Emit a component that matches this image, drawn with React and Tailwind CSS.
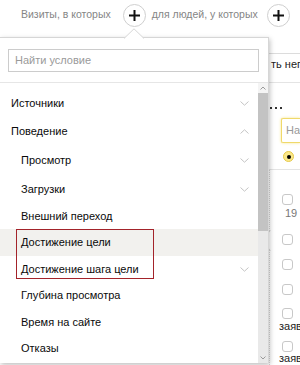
import React from "react";

function PlusCircle({ className = "" }) {
  return (
    <div className={"flex h-[23px] w-[23px] shrink-0 items-center justify-center rounded-full border border-[#cfcfcf] bg-white " + className}>
      <svg width="13" height="13" viewBox="0 0 13 13">
        <path d="M6.5 1v11M1 6.5h11" stroke="#111" strokeWidth="2" />
      </svg>
    </div>
  );
}

function Chevron({ up }) {
  return (
    <svg width="9" height="5" viewBox="0 0 9 5" className="shrink-0">
      <path d={up ? "M0.5 4.5L4.5 0.8L8.5 4.5" : "M0.5 0.5L4.5 4.2L8.5 0.5"} fill="none" stroke="#c4c4c4" strokeWidth="1" />
    </svg>
  );
}

const items = [
  { t: "Источники", h: 28, indent: false, ch: "down" },
  { t: "Поведение", h: 29, indent: false, ch: "up" },
  { t: "Просмотр", h: 29, indent: true, ch: "down" },
  { t: "Загрузки", h: 29, indent: true, ch: "down" },
  { t: "Внешний переход", h: 25, indent: true },
  { t: "Достижение цели", h: 27, indent: true, active: true },
  { t: "Достижение шага цели", h: 26, indent: true, ch: "down" },
  { t: "Глубина просмотра", h: 27, indent: true },
  { t: "Время на сайте", h: 26, indent: true },
  { t: "Отказы", h: 26, indent: true },
];

function Box() {
  return <div className="h-[11px] w-[11px] rounded-[3px] border border-[#c8c8c8] bg-white" />;
}

export default function App() {
  return (
    <div className="relative h-[365px] w-[300px] overflow-hidden bg-white font-['Liberation_Sans',Arial,sans-serif]">
      {/* header */}
      <div className="flex h-[30px] items-center whitespace-nowrap pl-[21px] text-[10.5px] text-[#858585]">
        <span>Визиты, в которых</span>
        <PlusCircle className="ml-[12px]" />
        <span className="ml-[6px]">для людей, у которых</span>
        <PlusCircle className="ml-[9px]" />
      </div>

      {/* background page (right column visible beside the popup) */}
      <div className="ml-[268px] flex flex-col text-[11px] text-[#222]">
        <div className="mt-[23px] h-[20px] overflow-hidden whitespace-nowrap border-t border-[#dcdcdc] pl-[3px] pt-[3px] leading-[14px]">ть неп</div>
        <div className="mt-[9px] border-t border-[#e4e4e4]" />
        <div className="mt-[24px] flex items-center gap-[3px] pl-[2px]">
          <span className="h-[2px] w-[2px] bg-[#333]" />
          <span className="h-[2px] w-[2px] bg-[#333]" />
          <span className="h-[2px] w-[2px] bg-[#333]" />
        </div>
        <div className="ml-[13px] mt-[9px] flex h-[25px] items-center overflow-hidden whitespace-nowrap rounded-l-[2px] border border-r-0 border-[#f0d96a] pl-[4px] text-[11px] text-[#999] shadow-[0_0_3px_#f7e48a]">На</div>
        <div className="ml-[15px] mt-[8px] flex h-[11px] w-[11px] items-center justify-center rounded-full border border-[#e6c94a] bg-[#fbe88a]">
          <span className="h-[4px] w-[4px] rounded-full bg-black" />
        </div>
        <div className="mt-[7px] border-t border-[#e4e4e4]" />
        <div className="ml-[14px] mt-[24px]"><Box /></div>
        <div className="ml-[17px] mt-[2px] text-[11px] leading-[13px] text-[#777]">19</div>
        <div className="ml-[14px] mt-[14px]"><Box /></div>
        <div className="ml-[14px] mt-[14px]"><Box /></div>
        <div className="ml-[14px] mt-[14px]"><Box /></div>
        <div className="ml-[14px] mt-[13px]"><Box /></div>
        <div className="ml-[11px] mt-[1px] overflow-hidden whitespace-nowrap leading-[13px]">заяв</div>
        <div className="ml-[14px] mt-[8px]"><Box /></div>
        <div className="ml-[11px] overflow-hidden whitespace-nowrap leading-[13px]">заяв</div>
      </div>
      <div className="absolute bottom-0 left-[269px] top-[170px] border-l border-dotted border-[#d6d6d6]" />

      {/* left-pointing notch from right panel */}
      <svg className="absolute left-[260px] top-[230px]" width="11" height="21" viewBox="0 0 11 21">
        <path d="M10.5 0.5L1 10.5L10.5 20.5Z" fill="#fff" />
        <path d="M10.5 0.5L1 10.5L10.5 20.5" fill="none" stroke="#d8d8d8" strokeWidth="1" />
      </svg>

      {/* popup */}
      <div className="absolute left-0 top-[37px] flex h-[326px] w-[269px] flex-col border-r border-t border-[#d6d6d6] bg-white shadow-[1px_2px_5px_rgba(0,0,0,0.25)]">
        <svg className="absolute left-[124px] top-[-10px]" width="20" height="11" viewBox="0 0 20 11">
          <path d="M0 10.5L10 0.8L20 10.5Z" fill="#fff" />
          <path d="M0 10.5L10 0.8L20 10.5" fill="none" stroke="#d6d6d6" strokeWidth="1" />
        </svg>
        <div className="border-b border-[#e6e6e6] px-[8px] pb-[10px] pt-[11px]">
          <div className="flex h-[23px] w-[251px] items-center border border-[#cccccc] pl-[6px] text-[11px] text-[#9a9a9a]">
            Найти условие
          </div>
        </div>
        <div className="flex min-h-0 flex-1">
          <div className="relative flex-1 pt-[6px]">
            {items.map((it) => (
              <div
                key={it.t}
                style={{ height: it.h }}
                className={
                  "flex items-center justify-between pr-[9px] text-[11px] text-[#0a0a0a] " +
                  (it.indent ? "pl-[21px] " : "pl-[11px] ") +
                  (it.active ? "bg-[#f2f1ee]" : "")
                }
              >
                <span className="whitespace-nowrap">{it.t}</span>
                {it.ch && <Chevron up={it.ch === "up"} />}
              </div>
            ))}
            <div className="pointer-events-none absolute left-[16px] top-[146px] h-[50px] w-[138px] border-[1.5px] border-[#a3232a]" />
          </div>
          {/* scrollbar */}
          <div className="flex w-[10px] flex-col bg-[#e9e9e9]">
            <div className="flex h-[10px] items-center justify-center bg-[#f4f4f4]">
              <svg width="6" height="4" viewBox="0 0 6 4"><path d="M0.5 3.5L3 1L5.5 3.5" fill="none" stroke="#9a9a9a" strokeWidth="1" /></svg>
            </div>
            <div className="h-[138px] bg-[#c3c3c3]" />
            <div className="flex-1" />
            <div className="flex h-[10px] items-center justify-center">
              <svg width="6" height="4" viewBox="0 0 6 4"><path d="M0.5 0.5L3 3L5.5 0.5" fill="none" stroke="#9a9a9a" strokeWidth="1" /></svg>
            </div>
          </div>
        </div>
      </div>
    </div>
  );
}
